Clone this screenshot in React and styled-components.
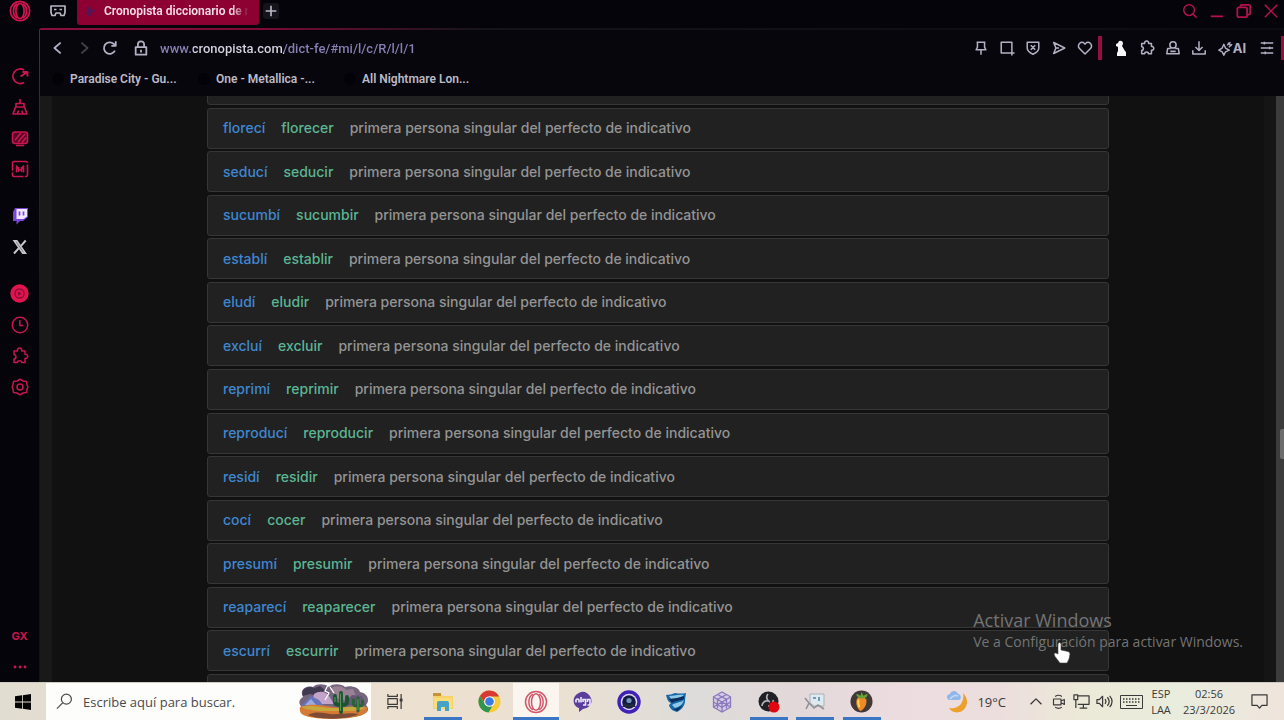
import React from "react";
import styled, { createGlobalStyle, css } from "styled-components";

const GlobalStyle = createGlobalStyle`
  *, *::before, *::after { box-sizing: border-box; }
  html, body, #root { height: 100%; }
  body { margin: 0; background: #05040b; overflow: hidden; font-family: Inter, "Liberation Sans", sans-serif; }
  button, input { font: inherit; color: inherit; border: 0; padding: 0; margin: 0; background: none; outline: none; }
  a { text-decoration: none; color: inherit; }
  ul { list-style: none; margin: 0; padding: 0; }
  p { margin: 0; }
`;

const Screen = styled.div`
  height: 100%;
  display: flex;
  flex-direction: column;
  position: relative;
`;

const Browser = styled.div`
  flex: 1;
  min-height: 0;
  display: flex;
`;

const Sidebar = styled.nav`
  width: 39px;
  flex: none;
  display: flex;
  flex-direction: column;
  gap: 16px;
  color: #c9164f;
  background: #05040b;
`;

const SideGroup = styled.div`
  display: flex;
  flex-direction: column;
  ${(p) => p.$first && css`margin-top: 22px;`}
  ${(p) => p.$last && css`margin-top: auto;`}
`;

const SideButton = styled.button`
  height: ${(p) => (p.$logo ? 22 : 31)}px;
  display: grid;
  place-items: center;
  font-size: 11px;
  font-weight: 700;
`;

const Column = styled.div`
  flex: 1;
  min-width: 0;
  display: flex;
  flex-direction: column;
`;

const TabBar = styled.header`
  height: 28px;
  display: flex;
  align-items: flex-start;
  color: #b9b8c4;
`;

const IconButton = styled.button`
  width: ${(p) => p.$w || 26}px;
  height: ${(p) => p.$h || 26}px;
  flex: none;
  display: flex;
  align-items: center;
  justify-content: center;
  color: ${(p) => p.$color || "inherit"};
  font-size: 13px;
  font-weight: 700;
`;

const Tab = styled.button`
  width: 182px;
  height: 25px;
  display: flex;
  align-items: center;
  gap: 7px;
  padding: 0 10px 3px 8px;
  border-radius: 0 0 3px 3px;
  background: #8c0032;
  color: #f4dfe7;
  font-family: Roboto, "Liberation Sans", sans-serif;
  font-size: 12px;
  font-weight: 600;
`;

const TabTitle = styled.span`
  flex: 1;
  overflow: hidden;
  white-space: nowrap;
  text-align: left;
  mask-image: linear-gradient(90deg, #000 88%, transparent 100%);
`;

const NewTab = styled(IconButton)`
  margin: 3px 0 0 4px;
  background: #15131c;
  border-radius: 3px;
`;

const WindowControls = styled.div`
  margin-left: auto;
  display: flex;
  color: #b3124a;
`;

const Frame = styled.div`
  flex: 1;
  min-height: 0;
  display: flex;
  flex-direction: column;
  padding: 2px 0 0 1px;
  border-radius: 3px 0 0 0;
  background:
    linear-gradient(90deg, #8c0f3c 0, #7c0b35 220px, #16131c 440px, #0c0a12 100%) 0 0 / 100% 2px no-repeat,
    linear-gradient(180deg, #8c0f3c 0, #5a0a2a 130px, #1c1016 320px, #141214 100%) 0 0 / 1px 100% no-repeat,
    #07060d;
`;

const Toolbar = styled.div`
  height: 36px;
  flex: none;
  display: flex;
  align-items: center;
  padding-left: 5px;
  color: #b4b0c4;
`;

const Address = styled.label`
  flex: 1;
  min-width: 0;
  display: flex;
  align-items: center;
  gap: 6px;
  padding-left: 5px;
`;

const AddressInput = styled.input`
  flex: 1;
  min-width: 0;
  height: 22px;
  font-family: Roboto, "Liberation Sans", sans-serif;
  font-size: 13px;
  font-weight: 500;
  color: transparent;
  background: linear-gradient(90deg, #8a80b4 0 33px, #d9d6e4 33px 124px, #8a80b4 124px) text;
  -webkit-background-clip: text;
`;

const Divider = styled.span`
  width: ${(p) => (p.$edge ? 3 : 4)}px;
  height: 24px;
  flex: none;
  margin-right: ${(p) => (p.$edge ? 0 : 6)}px;
  background: #960d40;
`;

const Bookmarks = styled.nav`
  height: 30px;
  flex: none;
  display: flex;
  gap: 20px;
  padding: 0 0 4px 12px;
  color: #bcbac6;
  font-family: Roboto, "Liberation Sans", sans-serif;
  font-size: 12px;
  font-weight: 600;
`;

const Bookmark = styled.a`
  width: 126px;
  display: flex;
  align-items: center;
  gap: 6px;
  white-space: nowrap;
`;

const DarkDisc = styled.span`
  width: 12px;
  height: 12px;
  flex: none;
  border-radius: 50%;
  background: #030207;
`;

const Viewport = styled.div`
  flex: 1;
  min-height: 0;
  display: flex;
  overflow: hidden;
  background: #111;
`;

const Gutter = styled.div`
  width: 12px;
  flex: none;
  background: ${(p) => (p.$right ? "#151515" : "#191919")};
`;

const Page = styled.main`
  flex: 1;
  min-width: 0;
  display: flex;
  justify-content: center;
  overflow: hidden;
`;

const Results = styled.ul`
  width: 902px;
  display: flex;
  flex-direction: column;
  justify-content: space-between;
  margin: -32px 0 -33px;
`;

const Result = styled.li`
  height: 41px;
  flex: none;
  display: flex;
  align-items: center;
  gap: 16px;
  padding: 0 15px;
  border: 1px solid #363636;
  border-radius: 3px;
  background: #212121;
  color: #949494;
  font-size: 14px;
  font-weight: 500;
  line-height: 20px;
`;

const Form = styled.a`
  color: #3f87d0;
`;

const Lemma = styled.a`
  color: #5cb593;
`;

const Scrollbar = styled.div`
  width: 8px;
  flex: none;
  display: flex;
  flex-direction: column;
  align-items: flex-end;
  background: #3c3c3c;
`;

const Thumb = styled.span`
  width: 4px;
  height: 30px;
  margin-top: 333px;
  border-radius: 2px 0 0 2px;
  background: #6c6c6c;
`;

const Watermark = styled.aside`
  position: absolute;
  right: 41px;
  bottom: 68px;
  color: #747474;
  font-family: "Open Sans", "Noto Sans", sans-serif;
  font-size: 14px;
  line-height: 20px;
`;

const WatermarkTitle = styled.p`
  font-size: 18px;
  line-height: 24px;
`;

const Pointer = styled.svg`
  position: absolute;
  right: 213px;
  bottom: 56px;
`;

const Taskbar = styled.footer`
  height: 38px;
  flex: none;
  display: flex;
  align-items: stretch;
  border-top: 1px solid #cfcbc2;
  background: linear-gradient(90deg, #e2ddd1 0, #ece0d0 32%, #ebe1d3 44%, #dddcd9 54%, #e3d8d9 62%, #ecdce0 70%, #ecdedd 78%, #ece9d8 84%, #e9eddd 92%, #efe4dc 100%);
  color: #3b3a3a;
  font-family: "Open Sans", "Noto Sans", sans-serif;
`;

const TaskButton = styled.button`
  width: 46px;
  flex: none;
  display: flex;
  align-items: center;
  justify-content: center;
  background-color: ${(p) => (p.$active ? "#faf5ee" : "transparent")};
  ${(p) => p.$open && css`
    background-image: linear-gradient(#3a76c4, #3a76c4);
    background-repeat: no-repeat;
    background-position: bottom;
    background-size: ${p.$active ? "100%" : "38px"} 3px;
  `}
`;

const SearchBox = styled.label`
  width: 325px;
  display: flex;
  align-items: center;
  gap: 10px;
  padding: 0 2px 0 10px;
  background: #fdfdfc;
  color: #4a4a4a;
`;

const SearchInput = styled.input`
  flex: 1;
  min-width: 0;
  font-size: 13px;
  &::placeholder { color: #4a4a4a; opacity: 1; }
`;

const Apps = styled.div`
  width: 465px;
  display: flex;
  justify-content: space-between;
  margin-left: 3px;
`;

const Tray = styled.div`
  margin-left: auto;
  display: flex;
  align-items: center;
  padding-right: 10px;
`;

const Weather = styled.button`
  display: flex;
  align-items: center;
  gap: 9px;
  margin-right: 18px;
  font-size: 13px;
`;

const TrayText = styled.button`
  width: ${(p) => p.$w}px;
  margin-right: ${(p) => p.$gap}px;
  white-space: nowrap;
  display: flex;
  flex-direction: column;
  align-items: center;
  font-size: 11px;
  line-height: 16px;
`;

function Line({ size = 16, w = 2, children, ...rest }) {
  return (
    <svg width={size} height={size} viewBox="0 0 18 18" fill="none" stroke="currentColor" strokeWidth={w} strokeLinejoin="round" aria-hidden="true" {...rest}>
      {children}
    </svg>
  );
}

const puzzle = "M3 4h3.4a2.3 2.3 0 1 1 4.4 0H14v3.2a2.2 2.2 0 1 1 0 4.3V15.500h-3.400c0-2.500-4.200-2.500-4.200 0H3v-3.700c2.600 0 2.600-4.200 0-4.200z";

const OperaMark = ({ size = 22, color = "#d01550", w = 1.6 }) => (
  <svg width={size} height={size} viewBox="0 0 24 24" fill="none" stroke={color} strokeWidth={w} aria-hidden="true">
    <circle cx="12" cy="12" r="10.500" />
    <ellipse cx="12" cy="12" rx="4.500" ry="8.200" />
    <path d="M9 4.200C3.500 7 3.500 17 9 19.800M15 4.200c5.500 2.800 5.500 12.800 0 15.600" />
  </svg>
);

const sideTop = [
  ["GX Control", <Line size={18} w={1.8}><path d="M13 15.500A7.300 7.300 0 1 1 13 3" /><path d="M9.500 9.500 15.500 5.500M11.500 5h5v4.500" /></Line>],
  ["GX Cleaner", <Line size={18} w={1.6}><path d="M9 1v4.500M5 5.500h8v3.500H5zM4.500 9 2 16h14l-2.500-7M6.500 16l1-3.500M11.500 16 11 12.500" /></Line>],
  ["Player", <Line size={18} w={1.6}><rect x="1.500" y="3" width="15" height="11.500" rx="2.500" fill="#5a0828" /><path d="m4 11 6-7M7 13l7-8M11 13.500l4-5M5 16.500h8" /></Line>],
  ["Mods", <Line size={18} w={1.6}><rect x="1.500" y="1.500" width="15" height="15" rx="1.500" strokeDasharray="14 1.500" /><path d="M5.500 12.500V6l3.500 4 3.500-4v6.500M7.500 7v5M10.500 7v5" /></Line>],
];

const sideMid = [
  ["Twitch", (
    <svg width="18" height="18" viewBox="0 0 18 18" aria-hidden="true">
      <path d="M4 1h13v9l-5 4H9l-3.500 3.500V14H2V5z" fill="#7a46d8" />
      <path d="M5.500 2H16v7.500L12.500 12H5.500z" fill="#efe6ff" />
      <path d="M8.500 4.500v4M12.500 4.500v4" stroke="#7a46d8" strokeWidth="1.700" />
    </svg>
  )],
  ["X", (
    <svg width="16" height="16" viewBox="0 0 16 16" fill="none" stroke="#c6c6cc" aria-hidden="true">
      <path d="M2.300 1.800h2.500l8.500 12.400h-2.500z" strokeWidth="1.800" /><path d="M13.700 1.500 9 6.800M6.800 9.200 2 14.500" strokeWidth="2" />
    </svg>
  )],
];

const sideLow = [
  ["Player activo", (
    <svg width="19" height="19" viewBox="0 0 18 18" aria-hidden="true">
      <circle cx="9" cy="9" r="8.700" fill="#e0154f" /><circle cx="9" cy="9" r="4.300" fill="none" stroke="#8c0c36" strokeWidth="1.300" />
      <path d="M7.500 6.800 11.200 9l-3.700 2.200z" fill="#8c0c36" />
    </svg>
  )],
  ["Historial", <Line size={18} w={1.5}><circle cx="9" cy="9" r="7.700" /><path d="M8.800 4v5.400h3.400" /></Line>],
  ["Extensiones", <Line size={18} w={1.5}><path d={puzzle} /></Line>],
  ["Ajustes", <Line size={18} w={1.500}><path d="M9 1.200 12 3l3.500.5.500 3.500 1 2-1 2-.5 3.500-3.500.5L9 16.800 6 15l-3.500-.5L2 11 1 9l1-2 .5-3.500L6 3z" /><circle cx="9" cy="9" r="3" /></Line>],
];

const tools = [
  ["Fijar", <path d="M4 2.500h10M5 2.500v5.500L3.500 11h11L13 8V2.500M9 11v5.500" />],
  ["Captura", <path d="M2.500 2.500h12v12h-12zM14.500 14.500h3M14.500 14.500v3" />],
  ["Bloqueador", <path d="M2.500 2.500h13v6.500c0 3.500-3 5.500-6.500 7-3.500-1.500-6.500-3.500-6.500-7zM6.500 6l5 5M11.500 6l-5 5" />],
  ["Enviar", <path d="M3 2.800 15.500 9 3 15.200 5.500 9zM5.500 9H9" />],
  ["Favorito", <path d="M9 15.800 2.800 9.600a4 4 0 0 1 0-5.700 4 4 0 0 1 5.600 0l.6.700.6-.7a4 4 0 0 1 5.600 0 4 4 0 0 1 0 5.700z" />],
];

const moreTools = [
  ["Extensiones", <path d={puzzle} />],
  ["Perfil", <><circle cx="9" cy="5.500" r="3.500" /><path d="M6.500 9.500H3L2 15.500h14l-1-6h-3.500M6 12.800h6" /></>],
  ["Descargas", <path d="M9 1.500v10M5 7.800l4 4 4-4M2 11.500v4.200h14v-4.200" />],
];

const words = [
  ["florecí", "florecer"],
  ["seducí", "seducir"],
  ["sucumbí", "sucumbir"],
  ["establí", "establir"],
  ["eludí", "eludir"],
  ["excluí", "excluir"],
  ["reprimí", "reprimir"],
  ["reproducí", "reproducir"],
  ["residí", "residir"],
  ["cocí", "cocer"],
  ["presumí", "presumir"],
  ["reaparecí", "reaparecer"],
  ["escurrí", "escurrir"],
];

const Desert = () => (
  <svg width="71" height="35" viewBox="0 0 71 35" aria-hidden="true">
    <path d="M6 25C-1 20 1 15 5 13 1 6 8 1 15 3c4-4 13-3 16 0 4-4 13-3 16 0 5-2 14 0 15 5 8 1 10 9 6 13 4 4 2 8-3 9-4 5-50 6-58 0-4 0-5-2-1-5z" fill="#76657f" />
    <path d="M5 12C2 5 10 1 16 4l6-2 5 4-7 6-8-2z" fill="#403a50" />
    <path d="M32 5c7-5 14-2 16 1l7-1 3 7-8 5-12-3z" fill="#9a8195" />
    <path d="M16 10c6-4 12-2 15 2l5 8H14z" fill="#c3a3c9" />
    <path d="M3 22 13 12l8 4 7 9H3z" fill="#6574bd" />
    <path d="M7 21 13 15l6 7z" fill="#9fa9dd" />
    <path d="m48 17 6-6 10 1 4 9H48z" fill="#665775" />
    <path d="M2 23c10-4 23-2 33 0s24-3 34 0c2 4-2 8-8 9-13 4-42 4-53 0-5-1-7-4-6-9z" fill="#d57b35" />
    <path d="M3 23c12-3 20 1 32 1 11 0 22-3 33 0-9 4-18 3-28 3-13 0-25 1-37-4z" fill="#c6a93c" />
    <path d="M10 31c8-4 15-2 22-1s19-2 29 0c-10 6-41 6-51 1z" fill="#7d4a35" />
    <path d="m30 1-3 6 4 2-4 7M32 3l4 6" fill="none" stroke="#fff" strokeWidth="1.200" />
    <path d="M43 28V9M37 12v6q0 3 5 3M49 13v5q0 3-5 3" fill="none" stroke="#18542f" strokeWidth="3.800" strokeLinecap="round" />
    <path d="M42.500 27V9.500M37 13v5" stroke="#4d9750" strokeWidth="1.200" />
    <path d="M60 27V14M55.500 16v4q0 2 4 2M64.500 17v3q0 2-4 2" fill="none" stroke="#28633a" strokeWidth="3" strokeLinecap="round" />
    <path d="M60 26V15" stroke="#5b9b55" strokeWidth="1" />
  </svg>
);

const apps = [
  ["Explorador de archivos", true, false, (
    <svg width="22" height="20" viewBox="0 0 22 20" aria-hidden="true">
      <path d="M1 2h8l2 2h10v13H1z" fill="#f7d264" /><path d="M1 1h8v3H1z" fill="#c7923a" /><path d="M2 6h18v10H2z" fill="#fbdc78" />
      <path d="M5 11q0-2 2-2h8q2 0 2 2v8h-4v-4H9v4H5z" fill="#45a3c6" />
    </svg>
  )],
  ["Chrome", false, false, (
    <svg width="23" height="23" viewBox="0 0 24 24" aria-hidden="true">
      <circle cx="12" cy="12" r="11.500" fill="#f7cb3c" />
      <path d="M12 .5A11.500 11.500 0 0 1 22 6.700H12L7.500 14 2 6.300A11.500 11.500 0 0 1 12 .5z" fill="#d63a32" />
      <path d="M2 6.300A11.500 11.500 0 0 0 11 23.500l5-8.500-4 2-4.500-2.500z" fill="#31944d" />
      <circle cx="12" cy="12" r="5.600" fill="#fff" /><circle cx="12" cy="12" r="4.500" fill="#3b7ce0" />
    </svg>
  )],
  ["Opera GX", true, true, <OperaMark size={24} color="#d1566b" w={1.500} />],
  ["Algodoo", false, false, (
    <svg width="20" height="22" viewBox="0 0 20 22" aria-hidden="true">
      <path d="M8 1a9 9 0 0 1 10 6c2 6-2 10-8 11l-4 3v-4C1 15 0 11 1 7c1-3 4-5 7-6z" fill="#5b3d9b" />
      <path d="M3 11.500V9q1.500-2 3 0v2.500M8 6v5.500M10 11V8.500h2.500V14H10M14.500 11V8.500H17V14h-2.500" fill="none" stroke="#efe9ff" strokeWidth="1.600" />
    </svg>
  )],
  ["Grabador", false, false, (
    <svg width="24" height="24" viewBox="0 0 24 24" aria-hidden="true">
      <circle cx="12" cy="12" r="11.700" fill="#4021b8" /><circle cx="12" cy="12" r="8.300" fill="#dcd7ee" /><circle cx="12" cy="12" r="6.800" fill="#101a42" />
      <circle cx="12" cy="10.500" r="2.600" fill="#7392b8" /><path d="m5 17 3-4 4 2 4-2 3 4z" fill="#20283e" />
    </svg>
  )],
  ["Rocket League", false, false, (
    <svg width="22" height="22" viewBox="0 0 22 22" aria-hidden="true">
      <path d="M1 4q5 0 9-2 6 1 11 0-1 5-1 9c-1 5-4 8-8 10C8 20 5 18 4 14l2-2C3 11 2 8 1 4z" fill="#1767a9" />
      <path d="M4 5c5 0 8-2 15-1-3 3-8 3-12 5zM7 14c4-3 8-2 12-5-2 6-6 7-9 8z" fill="#8fc9ea" />
      <path d="M4 8c5-1 10-1 15-3v3c-4 2-8 1-12 4z" fill="#0c3059" /><path d="M8 18c4 0 7-2 9-4-1 3-3 5-5 6z" fill="#0c3059" />
    </svg>
  )],
  ["Cubo", false, false, (
    <svg width="22" height="22" viewBox="0 0 22 22" fill="none" stroke="#8b79be" strokeWidth="1.300" aria-hidden="true">
      <path d="m11 1 8.500 4.800v10.400L11 21l-8.500-4.800V5.800z" fill="#d5cbe4" /><path d="m2.500 6 8.500 5 8.500-5M11 11v10M6.500 3.500l9 5v9M15.500 3.500l-9 5v9M2.500 11l4 2.500 4.500 3 8.500-5.500M2.500 16l8.500-5 8.500 5" />
    </svg>
  )],
  ["OBS", true, false, (
    <svg width="22" height="22" viewBox="0 0 22 22" aria-hidden="true">
      <circle cx="10.500" cy="10.500" r="10" fill="#222027" /><path d="M10 3a5 5 0 0 0 2 8M4 15a5 5 0 0 1 6-5M15 9a5 5 0 0 1-5 6" fill="none" stroke="#b9b6ba" strokeWidth="1.600" />
      <circle cx="16" cy="16" r="5.500" fill="#e1060f" />
    </svg>
  )],
  ["Dibujo", true, false, (
    <svg width="22" height="20" viewBox="0 0 22 20" aria-hidden="true">
      <path d="M6 2h14v12H10l-4-3z" fill="#dfeaf0" stroke="#a9b1b6" /><path d="M1 6l4 5-3 6M5 11l5 5 4-3 6 4" fill="none" stroke="#8d9396" strokeWidth="1.600" /><path d="M9 6h3M15 5v4" stroke="#6a9fba" strokeWidth="2" />
    </svg>
  )],
  ["FL Studio", true, false, (
    <svg width="23" height="23" viewBox="0 0 24 24" aria-hidden="true">
      <circle cx="12" cy="12" r="11.500" fill="#403935" /><path d="M8 8c3-2 7-1 9 2 1 5-2 10-6 12-4-3-6-10-3-14z" fill="#f08a25" />
      <path d="M9 10c-1 3 0 6 1 8" stroke="#ffd25e" strokeWidth="2" fill="none" /><path d="M12 9C8 8 6 6 7 4l4 2 1-4 2 4 4-2c1 3-2 5-6 5z" fill="#65a436" />
    </svg>
  )],
];

const SideButtons = ({ items }) => items.map(([label, icon]) => (
  <SideButton key={label} aria-label={label}>{icon}</SideButton>
));

const ToolButtons = ({ items }) => items.map(([label, shape]) => (
  <IconButton key={label} aria-label={label}><Line size={16} w={1.700}>{shape}</Line></IconButton>
));

export default function App() {
  return (
    <Screen>
      <GlobalStyle />
      <Browser>
        <Sidebar aria-label="Barra lateral">
          <SideButton $logo aria-label="Opera GX"><OperaMark w={1.900} /></SideButton>
          <SideGroup $first><SideButtons items={sideTop} /></SideGroup>
          <SideGroup><SideButtons items={sideMid} /></SideGroup>
          <SideGroup><SideButtons items={sideLow} /></SideGroup>
          <SideGroup $last>
            <SideButton>GX</SideButton>
            <SideButton aria-label="Más">
              <svg width="14" height="4" viewBox="0 0 14 4" fill="currentColor" aria-hidden="true"><circle cx="2" cy="2" r="1.400" /><circle cx="7" cy="2" r="1.400" /><circle cx="12" cy="2" r="1.400" /></svg>
            </SideButton>
          </SideGroup>
        </Sidebar>
        <Column>
          <TabBar>
            <IconButton $w={38} $h={22} aria-label="GX Corner">
              <Line size={18} w={1.700}><path d="M2 4h14v6.500l-1 3h-3l-1-2.500H7L6 13.500H3l-1-3z" /><path d="M5 7.500h2.500M10.500 7.500H13" /></Line>
            </IconButton>
            <Tab>
              <svg width="12" height="12" viewBox="0 0 12 12" aria-hidden="true"><path d="M0 6h3V2h3v3h5v2H7v4H2V8H0z" fill="#5a1250" /></svg>
              <TabTitle>Cronopista diccionario de rimas</TabTitle>
            </Tab>
            <NewTab $w={16} $h={16} aria-label="Nueva pestaña"><Line size={12} w={2.500}><path d="M9 1v16M1 9h16" /></Line></NewTab>
            <WindowControls>
              <IconButton $w={27} $h={22} aria-label="Buscar"><Line size={16} w={1.700}><circle cx="8" cy="8" r="6" /><path d="m12.500 12.500 4 4" /></Line></IconButton>
              <IconButton $w={27} $h={22} aria-label="Minimizar"><Line size={16} w={2}><path d="M2 15h14" /></Line></IconButton>
              <IconButton $w={27} $h={22} aria-label="Restaurar"><Line size={16} w={2}><rect x="1.500" y="5" width="11" height="11" rx="2" /><path d="M5 5V3.500Q5 2 6.500 2h8Q16 2 16 3.500v8q0 1.500-1.500 1.500h-2" /></Line></IconButton>
              <IconButton $w={27} $h={22} aria-label="Cerrar"><Line size={16} w={1.700}><path d="m2 2 14 14M16 2 2 16" /></Line></IconButton>
            </WindowControls>
          </TabBar>
          <Frame>
            <Toolbar>
              <IconButton aria-label="Atrás"><Line w={2}><path d="m12 3-7 6 7 6" /></Line></IconButton>
              <IconButton $color="#44424e" aria-label="Adelante"><Line w={2}><path d="m6 3 7 6-7 6" /></Line></IconButton>
              <IconButton aria-label="Recargar"><Line w={2}><path d="M14.500 12A6.500 6.500 0 1 1 13 4.200l2 2M15.500 1.500v5h-5" /></Line></IconButton>
              <Address>
                <IconButton as="span"><Line w={2}><path d="M3 8h12v8.500H3zM5.500 8V5a3.500 3.500 0 0 1 7 0v3M9 11v3" /></Line></IconButton>
                <AddressInput aria-label="Dirección" defaultValue="www.cronopista.com/dict-fe/#mi/l/c/R/l/l/1" spellCheck={false} />
              </Address>
              <ToolButtons items={tools} />
              <Divider />
              <IconButton $color="#f6f6f8" aria-label="Peón">
                <svg width="14" height="17" viewBox="0 0 14 17" fill="currentColor" aria-hidden="true"><path d="M5 1q4-1 4 3l-1 2 3 5 1 1v4H3v-3l1-2V7L2 6V4l2-1z" /></svg>
              </IconButton>
              <ToolButtons items={moreTools} />
              <IconButton $w={40} aria-label="Aria AI">
                <Line size={15} w={1.700}><path d="m7 4 2 4.500L13.500 11 9 13l-2 4-2-4-4-2 4-2.500zM11 5l4-3.500M13 7.500 17 4M12 2l4 4" /></Line>AI
              </IconButton>
              <IconButton $w={29} aria-label="Configuración rápida"><Line size={16} w={1.700}><path d="M2 3.500h14M2 9h14M2 14.500h14M6 2v3M12 7.500v3M7 13v3" /></Line></IconButton>
              <Divider $edge />
            </Toolbar>
            <Bookmarks aria-label="Marcadores">
              <Bookmark href="#paradise"><DarkDisc />Paradise City - Gu...</Bookmark>
              <Bookmark href="#one"><DarkDisc />One - Metallica -...</Bookmark>
              <Bookmark href="#nightmare"><DarkDisc />All Nightmare Lon...</Bookmark>
            </Bookmarks>
            <Viewport>
              <Gutter />
              <Page>
                <Results>
                  <Result aria-hidden="true" />
                  {words.map(([form, lemma]) => (
                    <Result key={form}>
                      <Form href={`#${form}`}>{form}</Form>
                      <Lemma href={`#${lemma}`}>{lemma}</Lemma>
                      <span>primera persona singular del perfecto de indicativo</span>
                    </Result>
                  ))}
                  <Result aria-hidden="true" />
                </Results>
              </Page>
              <Gutter $right />
              <Scrollbar><Thumb /></Scrollbar>
            </Viewport>
          </Frame>
        </Column>
      </Browser>
      <Taskbar>
        <TaskButton aria-label="Inicio">
          <svg width="16" height="16" viewBox="0 0 16 16" fill="#050505" aria-hidden="true"><path d="M0 2.300 7 1.300V7.600H0zM7.800 1.200 16 0v7.600H7.800zM0 8.400h7v6.300l-7-1zM7.800 8.400H16V16l-8.200-1.200z" /></svg>
        </TaskButton>
        <SearchBox>
          <Line size={17} w={1.300}><circle cx="11" cy="6.500" r="5.300" /><path d="M7 10.500 1 16.500" /></Line>
          <SearchInput type="text" aria-label="Buscar" placeholder="Escribe aquí para buscar." />
          <Desert />
        </SearchBox>
        <TaskButton aria-label="Vista de tareas">
          <Line size={17} w={1.300}><path d="M2 1v2.500h10V1M2 6h10v6H2zM2 17v-2.500h10V17M16 1v16" /><path d="M16 6v3" strokeWidth="3" /></Line>
        </TaskButton>
        <Apps>
          {apps.map(([label, open, active, icon]) => (
            <TaskButton key={label} aria-label={label} $open={open} $active={active}>{icon}</TaskButton>
          ))}
        </Apps>
        <Tray>
          <Weather>
            <svg width="22" height="23" viewBox="0 0 22 23" aria-hidden="true">
              <path d="M17 3c6 6 5 14-1 18-5 3-11 1-13-3 9 2 16-5 14-15z" fill="#eda02c" /><path d="M3 10c-4-3-1-6 1-6 1-4 7-4 8 0 3 0 4 5 1 6z" fill="#8fb7ea" /><path d="M4 9q4-5 8-3" stroke="#c4d9f5" strokeWidth="1.500" fill="none" />
            </svg>
            19°C
          </Weather>
          <IconButton $w={23} aria-label="Mostrar iconos ocultos"><Line size={14} w={1.700}><path d="m2 12 7-7 7 7" /></Line></IconButton>
          <IconButton $w={23} aria-label="Reunirse ahora"><Line size={15} w={1.400}><path d="M3 6h9v7H3zM12 8.500l4-2v6l-4-2M5 3q4-3 8 0M5 16q4 2.500 8 0" /></Line></IconButton>
          <IconButton $w={23} aria-label="Red"><Line size={17} w={1.300}><path d="M5 3h12v9H5M11 12v4M7 16h8M1 2h4v5H1zM3 7v9" /></Line></IconButton>
          <IconButton $w={23} aria-label="Volumen"><Line size={17} w={1.300}><path d="M1 7h2.500L7 3.500v11L3.500 11H1zM9.500 6.500q2 2.500 0 5M12 4.500q4 4.500 0 9M14.500 3q5 6 0 12" /></Line></IconButton>
          <IconButton $w={30} aria-label="Teclado">
            <svg width="23" height="14" viewBox="0 0 23 14" fill="none" stroke="currentColor" aria-hidden="true"><path d="M.5.500h22v13H.500z" /><path d="M3 4h17M3 7h17" strokeDasharray="1.500 1.500" strokeWidth="1.300" /><path d="M6 10.500h11" /></svg>
          </IconButton>
          <TrayText $w={30} $gap={4}><span>ESP</span><span>LAA</span></TrayText>
          <TrayText $w={58} $gap={6}><span>02:56</span><span>23/3/2026</span></TrayText>
          <IconButton $w={30} aria-label="Notificaciones"><Line size={17} w={1.300}><path d="M1 2h16v11h-5.500L9 16l-2.500-3H1z" /></Line></IconButton>
        </Tray>
      </Taskbar>
      <Watermark>
        <WatermarkTitle>Activar Windows</WatermarkTitle>
        <p>Ve a Configuración para activar Windows.</p>
      </Watermark>
      <Pointer width="18" height="22" viewBox="0 0 18 22" aria-hidden="true">
        <path d="M5 2.500q0-2 1.500-2T8 2.500V8l7 1.500q2 .5 2 2.500l-1 5-2 4H7L2 14.500 1 12q1-2 4 0z" fill="#fff" stroke="#444" strokeWidth=".6" />
      </Pointer>
    </Screen>
  );
}
